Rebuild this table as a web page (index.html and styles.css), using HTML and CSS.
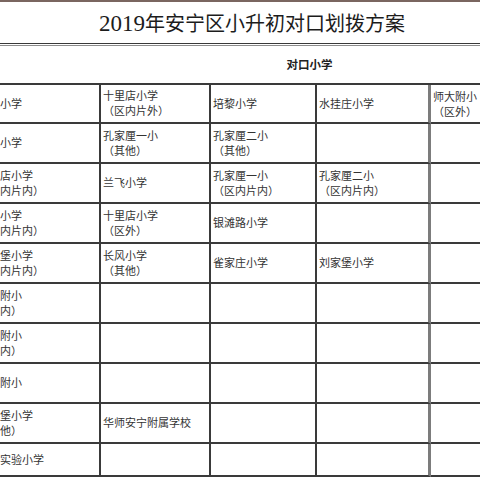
FILE: index.html
```html
<!DOCTYPE html>
<html lang="zh-CN">
<head>
<meta charset="utf-8">
<title>2019年安宁区小升初对口划拨方案</title>
<link rel="stylesheet" href="styles.css">
</head>
<body>
<div class="page">
  <div class="topline"></div>
  <div class="title"><span class="num">2019</span><span class="cjk">年安宁区小升初对口划拨方案</span></div>
  <div class="dbl"></div>
  <div class="grid">
    <div class="hcell first"></div>
    <div class="hcell span">对口小学</div>

    <div class="c c1"><span>小学</span></div>
    <div class="c"><span>十里店小学</span><span>（区内片外）</span></div>
    <div class="c"><span>培黎小学</span></div>
    <div class="c"><span>水挂庄小学</span></div>
    <div class="c c5 top"><span>师大附小</span><span>（区外）</span></div>

    <div class="c c1"><span>小学</span></div>
    <div class="c"><span>孔家厘一小</span><span>（其他）</span></div>
    <div class="c"><span>孔家厘二小</span><span>（其他）</span></div>
    <div class="c"></div>
    <div class="c c5"></div>

    <div class="c c1"><span>店小学</span><span>内片内）</span></div>
    <div class="c"><span>兰飞小学</span></div>
    <div class="c"><span>孔家厘一小</span><span>（区内片内）</span></div>
    <div class="c"><span>孔家厘二小</span><span>（区内片内）</span></div>
    <div class="c c5"></div>

    <div class="c c1"><span>小学</span><span>内片内）</span></div>
    <div class="c"><span>十里店小学</span><span>（区外）</span></div>
    <div class="c"><span>银滩路小学</span></div>
    <div class="c"></div>
    <div class="c c5"></div>

    <div class="c c1"><span>堡小学</span><span>内片内）</span></div>
    <div class="c"><span>长风小学</span><span>（其他）</span></div>
    <div class="c"><span>雀家庄小学</span></div>
    <div class="c"><span>刘家堡小学</span></div>
    <div class="c c5"></div>

    <div class="c c1"><span>附小</span><span>内）</span></div>
    <div class="c"></div>
    <div class="c"></div>
    <div class="c"></div>
    <div class="c c5"></div>

    <div class="c c1"><span>附小</span><span>内）</span></div>
    <div class="c"></div>
    <div class="c"></div>
    <div class="c"></div>
    <div class="c c5"></div>

    <div class="c c1"><span>附小</span></div>
    <div class="c"></div>
    <div class="c"></div>
    <div class="c"></div>
    <div class="c c5"></div>

    <div class="c c1"><span>堡小学</span><span>他）</span></div>
    <div class="c"><span>华师安宁附属学校</span></div>
    <div class="c"></div>
    <div class="c"></div>
    <div class="c c5"></div>

    <div class="c c1"><span>实验小学</span></div>
    <div class="c"></div>
    <div class="c"></div>
    <div class="c"></div>
    <div class="c c5"></div>
  </div>
</div>
</body>
</html>
```

FILE: styles.css
```css
html, body {
  margin: 0;
  padding: 0;
  background: #ffffff;
}

body {
  width: 480px;
  height: 480px;
  overflow: hidden;
}

.page {
  width: 518px;
  font-family: "Noto Sans CJK SC", "Noto Sans", sans-serif;
  color: #333333;
}

.topline {
  height: 2px;
  background: #7a6660;
}

.title {
  width: 480px;
  height: 41px;
  display: flex;
  align-items: center;
  justify-content: center;
  padding-left: 24px;
  padding-top: 1px;
  box-sizing: border-box;
  line-height: 1;
  color: #1c1c1c;
  white-space: nowrap;
}

.num {
  font-family: "Liberation Serif", serif;
  font-size: 23px;
}

.cjk {
  font-family: "Noto Sans CJK SC", sans-serif;
  font-size: 20px;
  font-weight: 400;
}

.dbl {
  height: 1px;
  border-top: 1px solid #3a3a3a;
  border-bottom: 1px solid #8c8c8c;
}

.grid {
  display: grid;
  grid-template-columns: 101px 110px 106px 114px 87px;
  grid-template-rows: 39px 39px repeat(8, 40px) 33px;
}

.hcell {
  border-bottom: 2px solid #3a3a3a;
  box-sizing: border-box;
}

.hcell.span {
  grid-column: 2 / 6;
  display: flex;
  align-items: center;
  justify-content: center;
  padding-bottom: 2px;
  font-size: 11.5px;
  font-weight: 700;
  color: #222222;
}

.c {
  box-sizing: border-box;
  border-right: 2px solid #3a3a3a;
  border-bottom: 2px solid #3a3a3a;
  display: flex;
  flex-direction: column;
  justify-content: center;
  padding-left: 2px;
  padding-bottom: 1px;
  font-size: 11px;
  line-height: 15px;
  white-space: nowrap;
  overflow: hidden;
}

.c1 {
  padding-left: 0;
}

.grid > .c:nth-child(5n+1) {
  border-right: 3px solid #7c7c7c;
}

.c5 {
  border-right: none;
}

.top {
  justify-content: flex-start;
  padding-top: 4px;
}
```
